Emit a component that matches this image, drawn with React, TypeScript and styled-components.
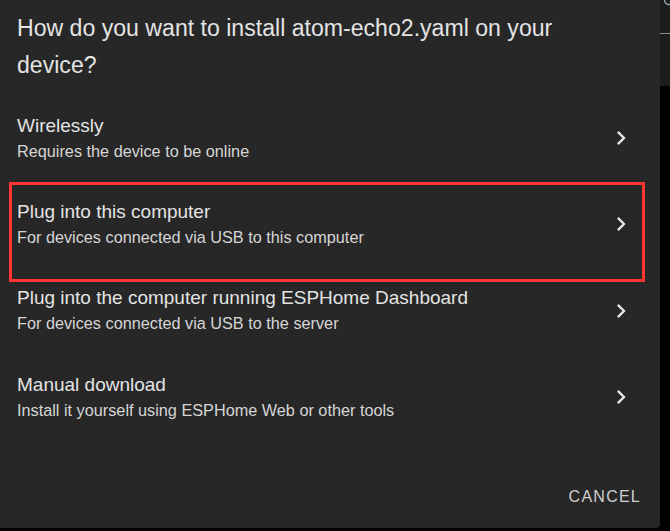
import React from "react";
import styled, { createGlobalStyle } from "styled-components";

const Global = createGlobalStyle`
  html, body { margin: 0; padding: 0; background: #000; }
  body { font-family: "Liberation Sans", Arial, sans-serif; }
`;

const Page = styled.div`
  display: flex;
  width: 670px;
  height: 531px;
  overflow: hidden;
  background: #000;
`;

const Dialog = styled.div`
  position: relative;
  width: 660px;
  height: 528px;
  flex: none;
  background: #272727;
  border-bottom-right-radius: 4px;
  display: flex;
  flex-direction: column;
`;

const Title = styled.h2`
  margin: 0;
  padding: 10px 60px 0 17px;
  font-size: 23.1px;
  font-weight: 400;
  line-height: 37px;
  color: #e3e3e3;
`;

const List = styled.div`
  margin-top: 11px;
  display: flex;
  flex-direction: column;
`;

const Row = styled.div`
  height: 86.33px;
  display: flex;
  align-items: center;
  padding: 0 25px 0 17px;
`;

const RowText = styled.div`
  flex: 1;
  display: flex;
  flex-direction: column;
`;

const RowTitle = styled.div`
  font-size: 19px;
  line-height: 24px;
  color: #e3e3e3;
`;

const RowSub = styled.div`
  margin-top: 1px;
  font-size: 16.25px;
  line-height: 24px;
  color: #d6d6d6;
`;

const Chevron = styled.svg`
  width: 28px;
  height: 28px;
  flex: none;
  fill: #e6e6e6;
`;

const Actions = styled.div`
  margin-top: auto;
  display: flex;
  justify-content: flex-end;
  padding: 0 11px 13px 0;
`;

const Button = styled.button`
  height: 36px;
  padding: 0 8px;
  border: none;
  background: transparent;
  color: #d0d0d0;
  font-family: "Liberation Sans", Arial, sans-serif;
  font-size: 16px;
  letter-spacing: 1.25px;
  text-transform: uppercase;
  cursor: pointer;
`;

const Highlight = styled.div`
  position: absolute;
  left: 9px;
  top: 182px;
  width: 636px;
  height: 100px;
  box-sizing: border-box;
  border: 3px solid #ff3535;
  pointer-events: none;
`;

const Side = styled.div`
  flex: 1;
  display: flex;
  flex-direction: column;
`;

const SideHeader = styled.div`
  position: relative;
  height: 86px;
  background: #1c1c1c;
  display: flex;
  flex-direction: column;
`;

const SideLine = styled.div`
  margin-top: 33px;
  height: 1px;
  background: #8a8a8a;
`;

const Ring = styled.svg`
  position: absolute;
  left: 3px;
  top: -6px;
  width: 12px;
  height: 12px;
`;

const options = [
  { title: "Wirelessly", sub: "Requires the device to be online" },
  { title: "Plug into this computer", sub: "For devices connected via USB to this computer" },
  { title: "Plug into the computer running ESPHome Dashboard", sub: "For devices connected via USB to the server" },
  { title: "Manual download", sub: "Install it yourself using ESPHome Web or other tools" },
];

export default function App() {
  return (
    <>
      <Global />
      <Page>
        <Dialog>
          <Title>How do you want to install atom-echo2.yaml on your device?</Title>
          <List>
            {options.map((o) => (
              <Row key={o.title}>
                <RowText>
                  <RowTitle>{o.title}</RowTitle>
                  <RowSub>{o.sub}</RowSub>
                </RowText>
                <Chevron viewBox="0 0 24 24">
                  <path d="M10 6L8.59 7.41 13.17 12l-4.58 4.59L10 18l6-6z" />
                </Chevron>
              </Row>
            ))}
          </List>
          <Actions>
            <Button>Cancel</Button>
          </Actions>
          <Highlight />
        </Dialog>
        <Side>
          <SideHeader>
            <Ring viewBox="0 0 12 12">
              <circle cx="6" cy="6" r="4.5" fill="none" stroke="#8aa0b4" strokeWidth="1.5" />
            </Ring>
            <SideLine />
          </SideHeader>
        </Side>
      </Page>
    </>
  );
}
